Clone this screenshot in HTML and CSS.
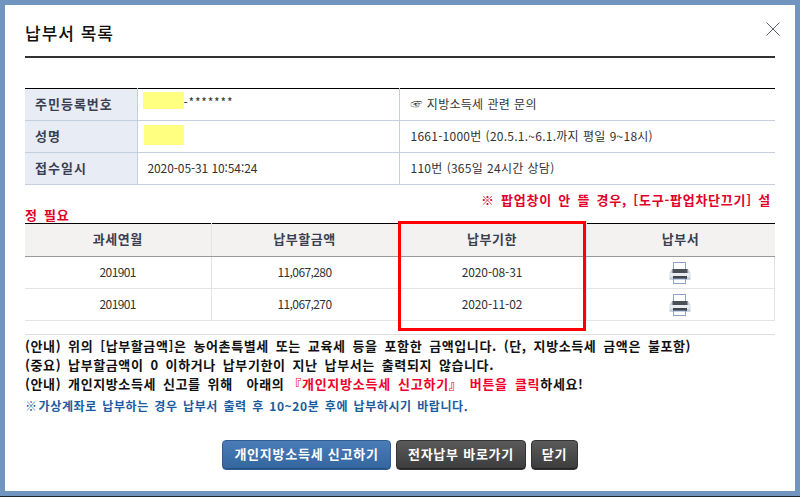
FILE: index.html
```html
<!DOCTYPE html>
<html lang="ko">
<head>
<meta charset="utf-8">
<title>납부서 목록</title>
<link rel="stylesheet" href="styles.css">
</head>
<body>
<div class="modal">
  <svg class="close" width="14" height="14" viewBox="0 0 14 14"><path d="M.5.5l13 13M13.5.5l-13 13" stroke="#5a6070" stroke-width="1" fill="none"/></svg>
  <h1 class="title">납부서 목록</h1>
  <table class="info">
    <colgroup><col class="c1"><col class="c2"><col></colgroup>
    <tr><th>주민등록번호</th><td class="val"><span class="mask mask-a"></span><span class="stars">-*******</span></td><td class="side">☞ 지방소득세 관련 문의</td></tr>
    <tr><th>성명</th><td class="val"><span class="mask mask-b"></span></td><td class="side">1661-1000번 (20.5.1.~6.1.까지 평일 9~18시)</td></tr>
    <tr><th>접수일시</th><td class="val">2020-05-31 10:54:24</td><td class="side">110번 (365일 24시간 상담)</td></tr>
  </table>
  <div class="popup-note">
    <div class="popup-first">※ 팝업창이 안 뜰 경우, [도구-팝업차단끄기] 설</div>
    <div>정 필요</div>
  </div>
  <div class="list-wrap">
    <table class="list">
      <colgroup><col class="l1"><col class="l2"><col class="l3"><col></colgroup>
      <tr><th>과세연월</th><th>납부할금액</th><th>납부기한</th><th>납부서</th></tr>
      <tr><td class="num">201901</td><td class="num">11,067,280</td><td class="date">2020-08-31</td><td><svg class="printer" viewBox="0 0 22 22" width="22" height="22"><rect x="4.5" y=".5" width="12" height="8" fill="#fff" stroke="#8ea3cc"/><path d="M3 7h16l2.500 4v6.500q0 .5-.5.5H1q-.5 0-.5-.5V11z" fill="#c9d1d8"/><rect x="3.500" y="7" width="15" height="4" fill="#4a5058"/><rect x="1" y="11" width="20" height="4" fill="#e6ebef"/><rect x="4" y="14" width="14" height="3" fill="#3f454c"/><rect x="4.500" y="17" width="12" height="4.500" fill="#fff" stroke="#8ea3cc"/></svg></td></tr>
      <tr><td class="num">201901</td><td class="num">11,067,270</td><td class="date">2020-11-02</td><td><svg class="printer" viewBox="0 0 22 22" width="22" height="22"><rect x="4.5" y=".5" width="12" height="8" fill="#fff" stroke="#8ea3cc"/><path d="M3 7h16l2.500 4v6.500q0 .5-.5.5H1q-.5 0-.5-.5V11z" fill="#c9d1d8"/><rect x="3.500" y="7" width="15" height="4" fill="#4a5058"/><rect x="1" y="11" width="20" height="4" fill="#e6ebef"/><rect x="4" y="14" width="14" height="3" fill="#3f454c"/><rect x="4.500" y="17" width="12" height="4.500" fill="#fff" stroke="#8ea3cc"/></svg></td></tr>
    </table>
    <div class="redbox"></div>
  </div>
  <div class="notes">
    <p>(안내) 위의 [납부할금액]은 농어촌특별세 또는 교육세 등을 포함한 금액입니다. (단, 지방소득세 금액은 불포함)</p>
    <p>(중요) 납부할금액이 0 이하거나 납부기한이 지난 납부서는 출력되지 않습니다.</p>
    <p>(안내) 개인지방소득세 신고를 위해 &nbsp;아래의 <span class="red">『개인지방소득세 신고하기』 버튼을 클릭</span>하세요!</p>
    <p class="blue"><span class="mark">※</span><span>가상계좌로 납부하는 경우 납부서 출력 후 10~20분 후에 납부하시기 바랍니다.</span></p>
  </div>
  <div class="buttons">
    <button class="btn btn-blue">개인지방소득세 신고하기</button>
    <button class="btn btn-dark">전자납부 바로가기</button>
    <button class="btn btn-dark btn-close">닫기</button>
  </div>
</div>
</body>
</html>
```

FILE: styles.css
```css
* { box-sizing: border-box; }
html, body { margin: 0; height: 497px; overflow: hidden; }
body {
  background: #7295bf;
  border-bottom: 1px solid #1c2530;
  font-family: "Noto Sans CJK KR", "Noto Sans", sans-serif;
  font-size: 12px;
  color: #333;
}
.modal {
  position: relative;
  margin: 5px 5px 0;
  height: 486px;
  background: #fff;
  padding: 0 20px;
}
.close { position: absolute; top: 17px; right: 15px; }
.title {
  margin: 0;
  height: 53px;
  border-bottom: 2px solid #333;
  font-size: 17px;
  font-weight: 500;
  line-height: 56px;
  color: #111;
  letter-spacing: 1px;
}
table { border-collapse: collapse; table-layout: fixed; width: 750px; }
.info { margin-top: 30px; border-top: 1px solid #000; }
.c1 { width: 112px; }
.c2 { width: 262px; }
.info tr { height: 32px; }
.info th, .info td { border-bottom: 1px solid #c3cfdd; padding: 0 0 3px; font-size: 12px; font-weight: 400; }
.info th {
  background: #e8edf5;
  border-right: 1px solid #c3cfdd;
  text-align: left;
  padding-left: 10px;
  font-weight: 700;
  font-size: 13px;
  color: #3b3f52;
  letter-spacing: 1px;
}
.info .val { padding-left: 10px; border-right: 1px solid #c3cfdd; letter-spacing: -.1px; }
.info .side { padding-left: 11px; letter-spacing: .25px; word-spacing: .5px; }
.stars { letter-spacing: .8px; }
.mask { display: inline-block; background: #ffff80; vertical-align: middle; }
.mask-a { width: 41px; height: 17px; margin: 0 0 6px -5px; }
.mask-b { width: 40px; height: 20px; margin-left: -4px; }
.popup-note {
  margin: 7px 0 0;
  height: 31px;
  font-size: 13px;
  line-height: 15px;
  font-weight: 700;
  color: #e0002a;
  letter-spacing: .75px;
  word-spacing: 2px;
}
.popup-first { text-align: right; padding-right: 4px; }
.list-wrap { position: relative; }
.list { border-top: 1px solid #000; }
.l1 { width: 186px; }
.l2 { width: 187px; }
.l3 { width: 188px; }
.list th {
  height: 33px;
  background: #f3f2f0;
  border-bottom: 1px solid #999;
  border-right: 1px solid #e4e4e4;
  font-size: 13px;
  font-weight: 700;
  color: #3b3f52;
  padding: 0 0 3px;
  letter-spacing: .5px;
}
.list td {
  height: 32px;
  text-align: center;
  border-bottom: 1px solid #e4e4e4;
  border-right: 1px solid #e4e4e4;
  padding: 0;
  font-size: 12px;
}
.list .num { letter-spacing: -.6px; padding-bottom: 3px; }
.list .date { letter-spacing: -.1px; padding-bottom: 3px; }
.list th:last-child { border-right: 0; }
.printer { display: block; margin: 0 auto; }
.redbox {
  position: absolute;
  left: 373px;
  top: -2px;
  width: 188px;
  height: 110px;
  border: 3px solid #f00;
}
.notes { margin-top: 13px; border-top: 1px solid #ddd; padding-top: 1px; }
.notes p {
  margin: 0;
  height: 19px;
  line-height: 19px;
  font-size: 13px;
  font-weight: 700;
  color: #111;
  letter-spacing: .6px;
  word-spacing: 2.700px;
  white-space: nowrap;
}
.red { color: #f0002a; margin-left: -3px; letter-spacing: .75px; }
.notes .blue { margin-top: 3px; color: #1a5c9e; font-size: 12px; letter-spacing: .6px; word-spacing: 1.500px; }
.mark { font-weight: 400; margin-right: 1px; }
.buttons { display: flex; justify-content: center; gap: 5px; margin-top: 25px; }
.btn {
  height: 30px;
  border-radius: 4px;
  border: 1px solid #333;
  color: #fff;
  font: 700 13px "Noto Sans CJK KR", "Noto Sans", sans-serif;
  letter-spacing: .75px;
  padding: 0 0 3px;
  width: 130px;
  background: linear-gradient(#5a5a5a, #3c3c3c);
  box-shadow: inset 0 -1px 0 #222;
}
.btn-blue {
  width: 169px;
  border-color: #2f5c92;
  background: linear-gradient(#4a7cb8, #33659f);
  box-shadow: inset 0 -1px 0 #25507f;
}
.btn-close { width: 47px; }
```
